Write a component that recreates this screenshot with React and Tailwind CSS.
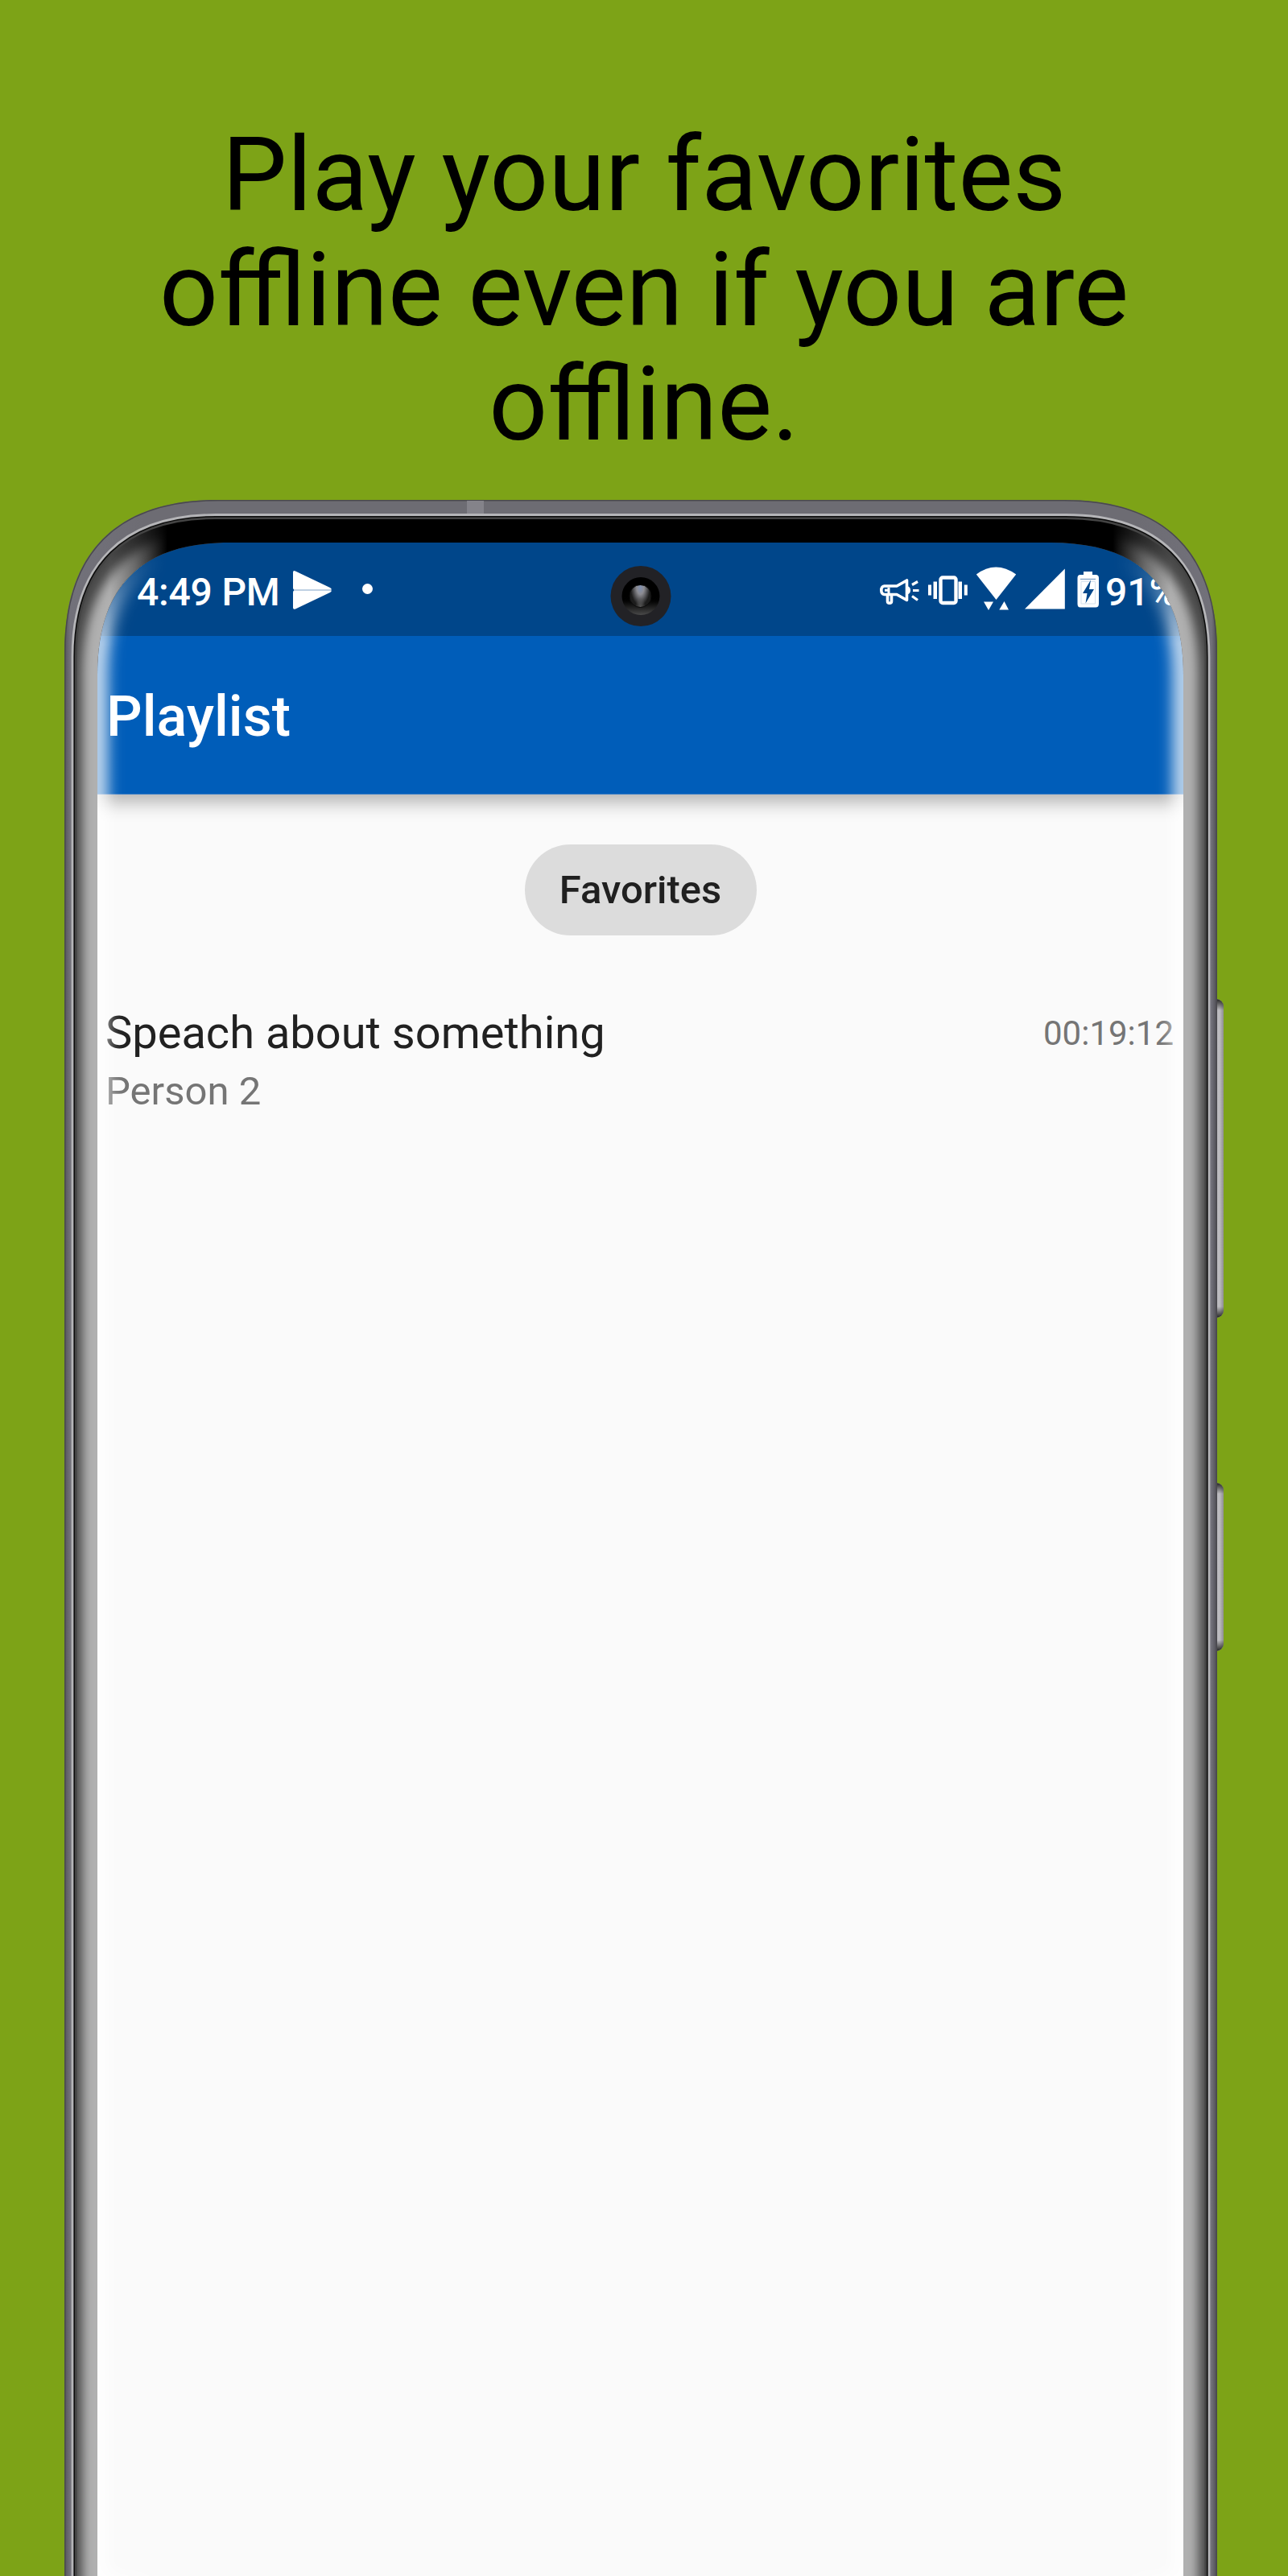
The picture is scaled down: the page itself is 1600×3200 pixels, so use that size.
const OUTER =
  'M80 3210V811C80 686 145 621 270 621H1322C1447 621 1512 686 1512 811V3210Z';
const RIM =
  'M90 3210V816C90 701 153 639.5 268 639.5H1324C1439 639.5 1502 701 1502 816V3210Z';
const SCREEN =
  'M121 3210V839C121 728 175 674 286 674H1305C1416 674 1470 728 1470 839V3210Z';

function PlayIcon() {
  return (
    <svg className="ml-[16px] h-12 w-12" viewBox="0 0 48 48" fill="#fff">
      <path d="M0 2Q0-1 3 .5L46 21Q48 22.3 48 23.4H2Q0 23.4 0 21.5Z" />
      <path d="M0 26.5Q0 24.6 2 24.6H48Q48 25.7 46 27L3 47.500Q0 48.500 0 46Z" />
      <path d="M1 24H47" stroke="#d3dfec" strokeWidth="1.4" />
    </svg>
  );
}

function StatusIcons() {
  return (
    <svg className="h-[56px] w-[276px]" viewBox="0 0 276 56" fill="#fff">
      <g fill="none" stroke="#fff" strokeWidth="3.6" strokeLinejoin="round">
        <path d="M5.500 24H21L33.500 17V41.500L21 34.500H5.500Q1.800 34 1.800 29.300T5.500 24Z" />
        <path d="M9.500 34.500V43Q9.500 45.200 12 45.200T14.500 43V34.500" />
        <path d="M6 29.300H11M11 26V34" strokeWidth="3" />
        <path d="M40 22.500L47 18.500M41 29.500H48.500M40 36.500L47 41.500" strokeWidth="3.200" strokeLinejoin="miter" />
      </g>
      <path d="M34 24Q38 25 38 29.300T34 34.500Z" />
      <rect x="75.500" y="13.500" width="19" height="31.500" rx="2.500" fill="none" stroke="#fff" strokeWidth="4.400" />
      <path d="M60 22.500h4v13h-4zM66.500 18.500h4.500v21.500h-4.500zM97.500 18.500h4.500v21.500h-4.500zM104.800 22.500h4v13h-4z" />
      <path d="M144.500 41L119.800 9.500Q144 -8.500 169.200 9.500Z" />
      <path d="M129 43.500H141L135 54ZM154.500 43V43L160 53.500H148.300Z" />
      <path d="M180 52.500L229.800 2.500V52.500Z" />
      <path d="M253 6h11v4h4Q272 10 272 14V46Q272 50.500 268 50.500H249Q245.500 50.500 245.500 46V14Q245.500 10 249 10H253Z" />
      <path d="M249 15.500H268" stroke="#8aa9cb" strokeWidth="1.500" />
      <path d="M250 18.500H267.500V46H250Z" fill="none" stroke="#d5e0ec" strokeWidth="1" />
      <path d="M262 16.500L252 33H257.500L255.500 45.500L266 28H260Z" fill="#00468a" />
    </svg>
  );
}

function Camera() {
  return (
    <div className="absolute left-1/2 top-[29px] z-30 flex h-[75px] w-[75px] -translate-x-1/2 items-center justify-center rounded-full bg-[#222226]">
      <div className="flex h-[47px] w-[47px] items-center justify-center rounded-full bg-linear-to-b from-black from-50% to-[#4a4a4a]">
        <div className="h-[29px] w-[28px] rounded-full border border-[#0c0c0c] bg-[radial-gradient(ellipse_at_50%_105%,#5c5c5c_0%,transparent_35%),radial-gradient(ellipse_at_50%_10%,#8090b0_0%,#8c8c92_25%,#1c1c1c_65%)]" />
      </div>
    </div>
  );
}

function StatusBar() {
  return (
    <div className="z-20 flex h-[116px] items-start bg-[#00468a] pl-[49px] pt-[30px] text-[48px] font-medium leading-[63px] text-white">
      <span className="whitespace-nowrap tracking-[-0.2px]">4:49 PM</span>
      <div className="flex h-[58px] items-center">
        <PlayIcon />
        <span className="mb-[3px] ml-[38px] h-[13px] w-[13px] rounded-full bg-white" />
      </div>
      <div className="ml-auto mr-[3px] flex">
        <StatusIcons />
        <span className="ml-1 w-[94px] whitespace-nowrap">91%</span>
      </div>
    </div>
  );
}

function Screen() {
  return (
    <div className="relative ml-[121px] flex h-[2526px] w-[1349px] flex-col overflow-hidden rounded-t-[140px] bg-[#fafafa]">
      <StatusBar />
      <header className="z-10 flex h-[197px] items-center border-b border-[#3a7cc4] bg-[#005db9] pl-[11px] pt-[5px] text-[70px] font-medium text-white shadow-[0_7px_22px_2px_rgba(0,0,0,0.3)]">
        Playlist
      </header>
      <main className="pt-[62px]">
        <div className="mx-auto flex h-[113px] w-[288px] items-center justify-center rounded-full bg-[#dcdcdc] text-[49px] font-medium text-[#202020]">
          Favorites
        </div>
        <div className="mt-[84px] flex items-center justify-between pl-[10px] pr-[12px] leading-[72px]">
          <span className="text-[56px] text-[#212121]">Speach about something</span>
          <span className="pt-[2px] text-[42px] text-[#757575]">00:19:12</span>
        </div>
        <div className="pl-[10px] text-[49px] leading-[72px] text-[#757575]">Person 2</div>
      </main>
      <Camera />
    </div>
  );
}

function PhoneFrame() {
  return (
    <svg className="pointer-events-none absolute inset-0 z-20 h-[3200px] w-[1600px]" viewBox="0 0 1600 3200">
      <defs>
        <linearGradient id="body" gradientUnits="userSpaceOnUse" x1="80" y1="0" x2="1512" y2="0">
          <stop offset="0" stopColor="#55545b" />
          <stop offset=".005" stopColor="#72717a" />
          <stop offset=".07" stopColor="#6d6c73" />
          <stop offset=".93" stopColor="#6d6c73" />
          <stop offset=".995" stopColor="#72717a" />
          <stop offset="1" stopColor="#4c4b52" />
        </linearGradient>
        <linearGradient id="button" x1="0" y1="0" x2="1" y2="0">
          <stop offset="0" stopColor="#a3a2a6" />
          <stop offset=".75" stopColor="#bebdc1" />
          <stop offset="1" stopColor="#8f8e92" />
        </linearGradient>
        <linearGradient id="buttonEnds" gradientUnits="userSpaceOnUse" x1="0" y1="1241" x2="0" y2="1637">
          <stop offset="0" stopColor="#222" />
          <stop offset=".035" stopColor="#222" stopOpacity="0" />
          <stop offset=".965" stopColor="#222" stopOpacity="0" />
          <stop offset="1" stopColor="#222" />
        </linearGradient>
        <linearGradient id="shortButtonEnds" gradientUnits="userSpaceOnUse" x1="0" y1="1842" x2="0" y2="2051">
          <stop offset="0" stopColor="#222" />
          <stop offset=".065" stopColor="#222" stopOpacity="0" />
          <stop offset=".935" stopColor="#222" stopOpacity="0" />
          <stop offset="1" stopColor="#222" />
        </linearGradient>
        <linearGradient id="fade" gradientUnits="userSpaceOnUse" x1="0" y1="680" x2="0" y2="800">
          <stop offset="0" stopColor="#000" />
          <stop offset=".5" stopColor="#888" />
          <stop offset="1" stopColor="#fff" />
        </linearGradient>
        <linearGradient id="glassSides" gradientUnits="userSpaceOnUse" x1="0" y1="0" x2="1600" y2="0">
          <stop offset=".085" stopColor="#fff" />
          <stop offset=".105" stopColor="#999" />
          <stop offset=".13" stopColor="#000" />
          <stop offset=".864" stopColor="#000" />
          <stop offset=".889" stopColor="#999" />
          <stop offset=".909" stopColor="#fff" />
        </linearGradient>
        <mask id="fadeMask" maskUnits="userSpaceOnUse" x="0" y="600" width="1600" height="2600">
          <rect y="600" width="1600" height="2600" fill="url(#fade)" />
        </mask>
        <mask id="glassMask" maskUnits="userSpaceOnUse" x="0" y="600" width="1600" height="2600">
          <rect y="600" width="1600" height="2600" fill="url(#glassSides)" />
        </mask>
        <clipPath id="outerClip"><path d={OUTER} /></clipPath>
        <clipPath id="screenClip"><path d={SCREEN} /></clipPath>
        <clipPath id="glassClip"><path d={RIM + SCREEN} clipRule="evenodd" /></clipPath>
        <filter id="soft" filterUnits="userSpaceOnUse" x="0" y="500" width="1600" height="2800">
          <feGaussianBlur stdDeviation="6.5" />
        </filter>
        <filter id="glow" filterUnits="userSpaceOnUse" x="0" y="500" width="1600" height="2800">
          <feGaussianBlur stdDeviation="9.5" />
        </filter>
      </defs>

      <rect x="1500" y="1241" width="20" height="396" rx="9" fill="url(#button)" />
      <rect x="1500" y="1241" width="20" height="396" rx="9" fill="url(#buttonEnds)" />
      <rect x="1500" y="1842" width="20" height="209" rx="9" fill="url(#button)" />
      <rect x="1500" y="1842" width="20" height="209" rx="9" fill="url(#shortButtonEnds)" />

      <path d={OUTER + SCREEN} fillRule="evenodd" fill="url(#body)" />
      <path d={OUTER} fill="none" stroke="#4a494e" strokeWidth="3" clipPath="url(#outerClip)" />
      <rect x="580" y="622" width="21" height="16" fill="#84838a" />
      <path d={RIM + SCREEN} fillRule="evenodd" fill="#000" />

      <g clipPath="url(#glassClip)">
        <g mask="url(#glassMask)">
          <path d={RIM + SCREEN} fillRule="evenodd" fill="#484848" />
          <path d={SCREEN} fill="none" stroke="#b0b0b0" strokeWidth="38" filter="url(#soft)" />
        </g>
        <path d={RIM} fill="none" stroke="#444" strokeWidth="11" />
        <path d={RIM} fill="none" stroke="#0c0c0c" strokeWidth="6" />
      </g>
      <path d={RIM} fill="none" stroke="#b5b5b8" strokeWidth="2.800" />

      <g clipPath="url(#screenClip)">
        <g mask="url(#fadeMask)">
          <g mask="url(#glassMask)">
            <path d={SCREEN} fill="none" stroke="#fff" strokeOpacity=".82" strokeWidth="25" filter="url(#glow)" />
          </g>
        </g>
      </g>
    </svg>
  );
}

export default function App() {
  return (
    <div className="relative h-[3200px] w-[1600px] overflow-hidden bg-[#7da317] font-['Roboto',sans-serif]">
      <h1 className="flex h-[674px] flex-col items-center pt-[146px] text-center text-[128px] font-normal leading-[142.500px] text-black">
        <span>Play your favorites</span>
        <span>offline even if you are</span>
        <span>offline.</span>
      </h1>
      <Screen />
      <PhoneFrame />
    </div>
  );
}
